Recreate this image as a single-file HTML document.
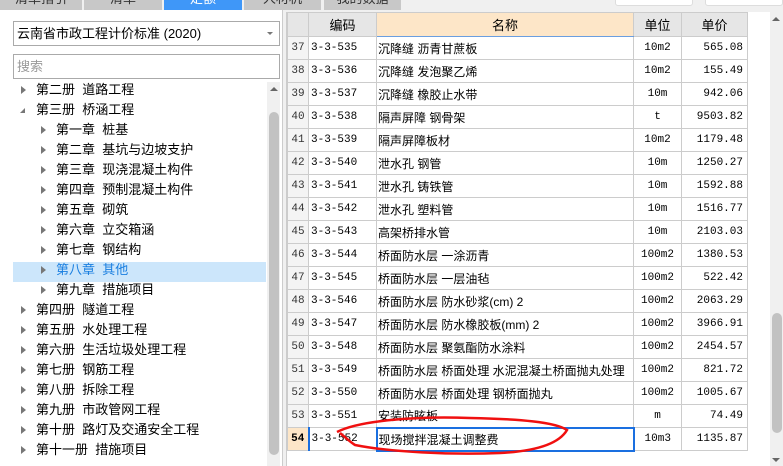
<!DOCTYPE html>
<html><head><meta charset="utf-8"><style>
*{margin:0;padding:0;box-sizing:border-box}
body{width:783px;height:466px;overflow:hidden;background:#f0f0f0;font-family:"Liberation Sans","Noto Sans CJK SC",sans-serif;font-size:13px;color:#000;position:relative}
.tab{position:absolute;top:-8px;height:18px;background:#c8c8c8;text-align:center;font-size:13px;line-height:14px;color:#333}
#left{position:absolute;left:0;top:10px;width:283px;height:456px;background:#fff;border-right:1px solid #ccc}
.sel{position:absolute;left:13px;top:11px;width:267px;height:25px;border:1px solid #aaa;font-size:13px;line-height:23px;padding-left:3px}
.srch{position:absolute;left:13px;top:44px;width:267px;height:25px;border:1px solid #aaa;color:#999;line-height:23px;padding-left:3px}
.tr{position:absolute;height:20px;line-height:20px;font-size:13px;white-space:pre}
.ar{position:absolute;width:0;height:0;border-top:4px solid transparent;border-bottom:4px solid transparent;border-left:5px solid #777}
.vs{position:absolute;background:#f0f0f0}
table{border-collapse:collapse;position:absolute;left:287px;top:12px;width:460px;background:#fff;table-layout:fixed}
td{border:1px solid #ccc;height:23px;font-size:11px;padding:0 2px;white-space:nowrap;overflow:hidden;font-family:"Liberation Mono","Noto Sans CJK SC",monospace}
th{border:1px solid #ccc;height:24px;background:#e6e6e6;font-weight:normal;font-size:13px}
td.n{text-align:center;background:#f4f4f4;color:#333}
td.nm{font-size:12px;font-family:"Liberation Sans","Noto Sans CJK SC",sans-serif;padding-left:1px}
td.u{text-align:center}
td.p{text-align:right;padding-right:4px}
</style></head><body>
<div class="tab" style="left:0;width:82px">清单指引</div>
<div class="tab" style="left:84px;width:78px">清单</div>
<div class="tab" style="left:164px;width:78px;background:#3f97f8;color:#fff">定额</div>
<div class="tab" style="left:244px;width:77px">人材机</div>
<div class="tab" style="left:324px;width:77px">我的数据</div>
<div style="position:absolute;left:615px;top:-4px;width:78px;height:10px;background:#fff;border:1px solid #ddd;border-radius:3px"></div>
<div style="position:absolute;left:705px;top:-4px;width:78px;height:10px;background:#fff;border:1px solid #ddd;border-radius:3px"></div>
<div id="left">
<div class="sel">云南省市政工程计价标准 (2020)<span style="position:absolute;right:6px;top:10px;border-left:3px solid transparent;border-right:3px solid transparent;border-top:3px solid #777"></span></div>
<div class="srch">搜索</div>
<div style="position:absolute;left:13px;top:252px;width:253px;height:20px;background:#cce6fb"></div>
<div class="vs" style="left:267px;top:72px;width:13px;height:384px"></div>
<div style="position:absolute;left:269px;top:102px;width:10px;height:343px;background:#c2c2c2;border-radius:5px"></div>
<div style="position:absolute;left:270px;top:77px;border-left:4px solid transparent;border-right:4px solid transparent;border-bottom:4px solid #666"></div>
</div>
<div style="position:absolute;left:286px;top:12px;width:484px;height:454px;background:#fff;border-left:1px solid #ccc"></div>
<div id="tree"></div>
<script>
var items=[[0,'第二册  道路工程','r'],[0,'第三册  桥涵工程','d'],[1,'第一章  桩基'],[1,'第二章  基坑与边坡支护'],[1,'第三章  现浇混凝土构件'],[1,'第四章  预制混凝土构件'],[1,'第五章  砌筑'],[1,'第六章  立交箱涵'],[1,'第七章  钢结构'],[1,'第八章  其他'],[1,'第九章  措施项目'],[0,'第四册  隧道工程'],[0,'第五册  水处理工程'],[0,'第六册  生活垃圾处理工程'],[0,'第七册  钢筋工程'],[0,'第八册  拆除工程'],[0,'第九册  市政管网工程'],[0,'第十册  路灯及交通安全工程'],[0,'第十一册  措施项目']];
var h='';items.forEach(function(it,i){var y=80+i*20;var x=it[0]?56:36;var ax=it[0]?41:21;
if(it[2]=='d')h+='<div style="position:absolute;left:20px;top:'+(y+8)+'px;border-left:5px solid transparent;border-bottom:5px solid #777"></div>';
else h+='<div class="ar" style="left:'+ax+'px;top:'+(y+6)+'px"></div>';
h+='<div class="tr" style="left:'+x+'px;top:'+y+'px;'+(i==9?'color:#1a7fe0':'')+'">'+it[1]+'</div>';});
document.getElementById('tree').innerHTML=h;
</script>
<table>
<colgroup><col style="width:21px"><col style="width:68px"><col style="width:257px"><col style="width:48px"><col style="width:66px"></colgroup>
<tr><th></th><th>编码</th><th style="background:#fde6c8;border-bottom:1px solid #6a9ee0">名称</th><th>单位</th><th>单价</th></tr>
<tbody id="tb"></tbody></table>
<div class="vs" style="left:770px;top:12px;width:13px;height:454px;background:#f0f0f0"></div>
<div style="position:absolute;left:772px;top:313px;width:10px;height:120px;background:#c2c2c2;border-radius:5px"></div>
<div style="position:absolute;left:772px;top:17px;border-left:4px solid transparent;border-right:4px solid transparent;border-bottom:4px solid #666"></div>
<div style="position:absolute;left:772px;top:458px;border-left:4px solid transparent;border-right:4px solid transparent;border-top:4px solid #666"></div>
<script>
var r=[['37','3-3-535','沉降缝 沥青甘蔗板','10m2','565.08'],['38','3-3-536','沉降缝 发泡聚乙烯','10m2','155.49'],['39','3-3-537','沉降缝 橡胶止水带','10m','942.06'],['40','3-3-538','隔声屏障 钢骨架','t','9503.82'],['41','3-3-539','隔声屏障板材','10m2','1179.48'],['42','3-3-540','泄水孔 钢管','10m','1250.27'],['43','3-3-541','泄水孔 铸铁管','10m','1592.88'],['44','3-3-542','泄水孔 塑料管','10m','1516.77'],['45','3-3-543','高架桥排水管','10m','2103.03'],['46','3-3-544','桥面防水层 一涂沥青','100m2','1380.53'],['47','3-3-545','桥面防水层 一层油毡','100m2','522.42'],['48','3-3-546','桥面防水层 防水砂浆(cm) 2','100m2','2063.29'],['49','3-3-547','桥面防水层 防水橡胶板(mm) 2','100m2','3966.91'],['50','3-3-548','桥面防水层 聚氨酯防水涂料','100m2','2454.57'],['51','3-3-549','桥面防水层 桥面处理 水泥混凝土桥面抛丸处理','100m2','821.72'],['52','3-3-550','桥面防水层 桥面处理 钢桥面抛丸','100m2','1005.67'],['53','3-3-551','安装防眩板','m','74.49'],['54','3-3-552','现场搅拌混凝土调整费','10m3','1135.87']];
var h='';r.forEach(function(x,i){var l=i==17;
h+='<tr><td class="n" style="'+(l?'background:#fde6c8;font-weight:bold;color:#000;':'')+'">'+x[0]+'</td><td style="'+(l?'border-left:2px solid #1a6fe0':'')+'">'+x[1]+'</td><td class="nm" style="'+(l?'border:2px solid #1a6fe0':'')+'">'+x[2]+'</td><td class="u">'+x[3]+'</td><td class="p">'+x[4]+'</td></tr>';});
document.getElementById('tb').innerHTML=h;
</script>
<svg style="position:absolute;left:0;top:0" width="783" height="466"><path d="M337,432 C360,420 420,416 470,418 C520,419 555,422 567,430 C560,442 540,451 500,453 C450,455 390,452 355,445 C350,442 345,437 340,433" fill="none" stroke="#f01010" stroke-width="2.5"/></svg>
</body></html>
